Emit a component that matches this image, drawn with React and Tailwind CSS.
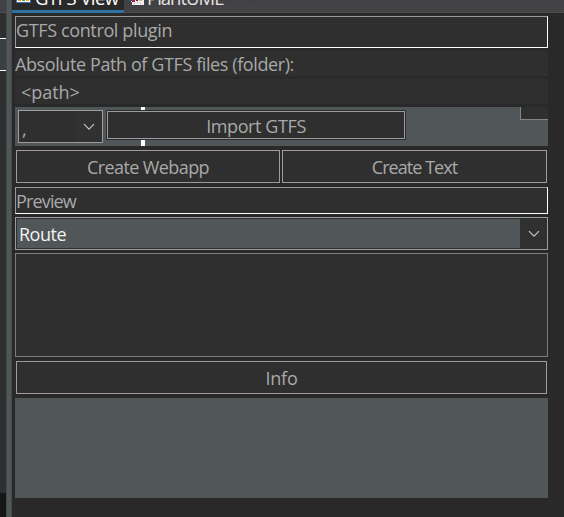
function Chevron() {
  return (
    <svg width="12" height="8" viewBox="0 0 12 8" fill="none" className="block">
      <path d="M1 1.2 L6 6.2 L11 1.2" stroke="#c6c6c6" strokeWidth="1.2" />
    </svg>
  );
}

function PushButton({ label, className }) {
  return (
    <button className={`flex items-center justify-center border border-[#9c9c9c] bg-[#2f2f2f] ${className}`}>
      <span>{label}</span>
    </button>
  );
}

function LeftEdge() {
  return (
    <div className="flex w-[6px] shrink-0 flex-col bg-[#2f2f2f]">
      <div className="h-[13px] border-b border-[#4b4b50] bg-[#424244]" />
      <div className="mt-[25px] h-[33px] border-y border-white bg-[#3a3f41]" />
      <div className="mt-auto h-6 bg-[#171717]" />
    </div>
  );
}

function TabBar() {
  return (
    <div className="flex h-[13px] overflow-hidden bg-linear-to-b from-[#414143] to-[#444447] text-[18.5px] leading-[24px] text-[#e4e4e4]">
      <div className="flex w-[112px] border-b-[3px] border-[#3071a3] bg-[#292929]">
        <svg width="16" height="3" viewBox="0 0 16 3" className="ml-1 shrink-0">
          <path d="M0 0H15V3H0Z" fill="#3d70b5" />
          <path d="M1 0H14V2H1Z" fill="#fff" />
          <path d="M2 0H5V1H2Z" fill="#e9902c" />
          <path d="M6 0H9V1H6Z" fill="#49a450" />
          <path d="M10 0H13V1H10Z" fill="#e9b92c" />
        </svg>
        <span className="-mt-[14px] ml-[3px] h-6 whitespace-nowrap tracking-[-0.55px] text-white">GTFS View</span>
      </div>
      <div className="flex flex-1 border-b border-[#4b4b50]">
        <svg width="16" height="5" viewBox="0 0 16 5" className="ml-1 shrink-0">
          <path d="M3 0H16V5H4V2H3Z" fill="#f1eeee" />
          <path d="M1 0H4V1H1Z" fill="#245897" />
          <path d="M4 0H7V2H4Z" fill="#b51c27" />
          <path d="M8 0H10V1H8Z" fill="#332a70" />
          <path d="M11 0H14V1H11Z" fill="#e5b14d" />
          <path d="M6 3H7V4H6ZM9 2H10V3H9ZM12 3H13V4H12Z" fill="#b8a9a9" />
        </svg>
        <span className="-mt-[14px] ml-[3px] h-6 whitespace-nowrap tracking-[-1px]">PlantUML</span>
      </div>
    </div>
  );
}

export default function App() {
  return (
    <div className="flex h-[517px] w-[564px] overflow-hidden bg-[#292929] font-['Open_Sans','Noto_Sans',sans-serif] text-[18px] leading-[24px] text-[#a9a9a9]">
      <LeftEdge />
      <div className="w-[6px] shrink-0 border-x border-[#454a4c] bg-[#515658]" />
      <div className="flex min-w-0 flex-1 flex-col">
        <TabBar />
        <div className="ml-[3px] mt-[3px] flex w-[533px] flex-col whitespace-nowrap">
          <div className="h-8 border border-b-white border-l-[#999] border-r-white border-t-[#999] bg-[#2f2f2f] pt-[1px]">
            <span className="tracking-[-0.37px]">GTFS control plugin</span>
          </div>
          <div className="mt-[3px] h-[25px] bg-[#2f2f2f] pt-[1px]">
            <span className="tracking-[-0.4px]">Absolute Path of GTFS files (folder):</span>
          </div>
          <div className="mt-[3px] h-[25px] bg-[#2f2f2f] pl-[6px] pt-[1px]">
            <span className="tracking-[-0.05px]">{"<path>"}</span>
          </div>
          <div className="relative mt-[3px] flex h-[39px] bg-[#515658] px-[3px] pt-[3px]">
            <div className="absolute left-[126px] top-0 h-[39px] w-1 bg-white" />
            <div className="flex h-[33px] w-[85px] items-center border border-[#9c9c9c] bg-[#2f2f2f]">
              <span className="w-[56px] pl-[3px] pt-[5px]">,</span>
              <div className="flex h-full flex-1 items-center justify-center bg-[#313131]"><Chevron /></div>
            </div>
            <div className="relative ml-[3px] h-[30px] w-[300px] bg-[#2b2b2b] p-px">
              <PushButton label="Import GTFS" className="h-[28px] w-[298px] pt-[1px] tracking-[-0.4px]" />
            </div>
            <div className="ml-auto -mr-[3px] -mt-[3px] h-[13px] w-7 border-b border-l border-[#858585] bg-[#2f2f2f]" />
          </div>
          <div className="mt-1 flex gap-0.5 px-px">
            <PushButton label="Create Webapp" className="h-[33px] w-[264px] pt-[1px] tracking-[-0.6px]" />
            <PushButton label="Create Text" className="h-[33px] w-[265px] pt-[1px] tracking-[-0.95px]" />
          </div>
          <div className="mt-1 h-[27px] border border-b-white border-l-[#999] border-r-white border-t-[#999] bg-[#2f2f2f] pt-[1px]">
            <span className="tracking-[-0.85px]">Preview</span>
          </div>
          <div className="mt-[3px] flex h-[33px] border border-[#9c9c9c] bg-[#303030] p-px">
            <div className="w-[503px] bg-[#515658] pl-[2px] pt-[3px] text-[#f2f2f2]">
              <span className="tracking-[-0.5px]">Route</span>
            </div>
            <div className="flex flex-1 items-center justify-center pl-[2px]"><Chevron /></div>
          </div>
          <div className="mt-[3px] h-[104px] border border-[#7d7a79] bg-[#2f2f2f]" />
          <PushButton label="Info" className="mx-px mt-1 h-[33px] pt-[1px] tracking-[-0.2px]" />
          <div className="mt-1 h-[100px] bg-[#515658]" />
        </div>
      </div>
    </div>
  );
}
